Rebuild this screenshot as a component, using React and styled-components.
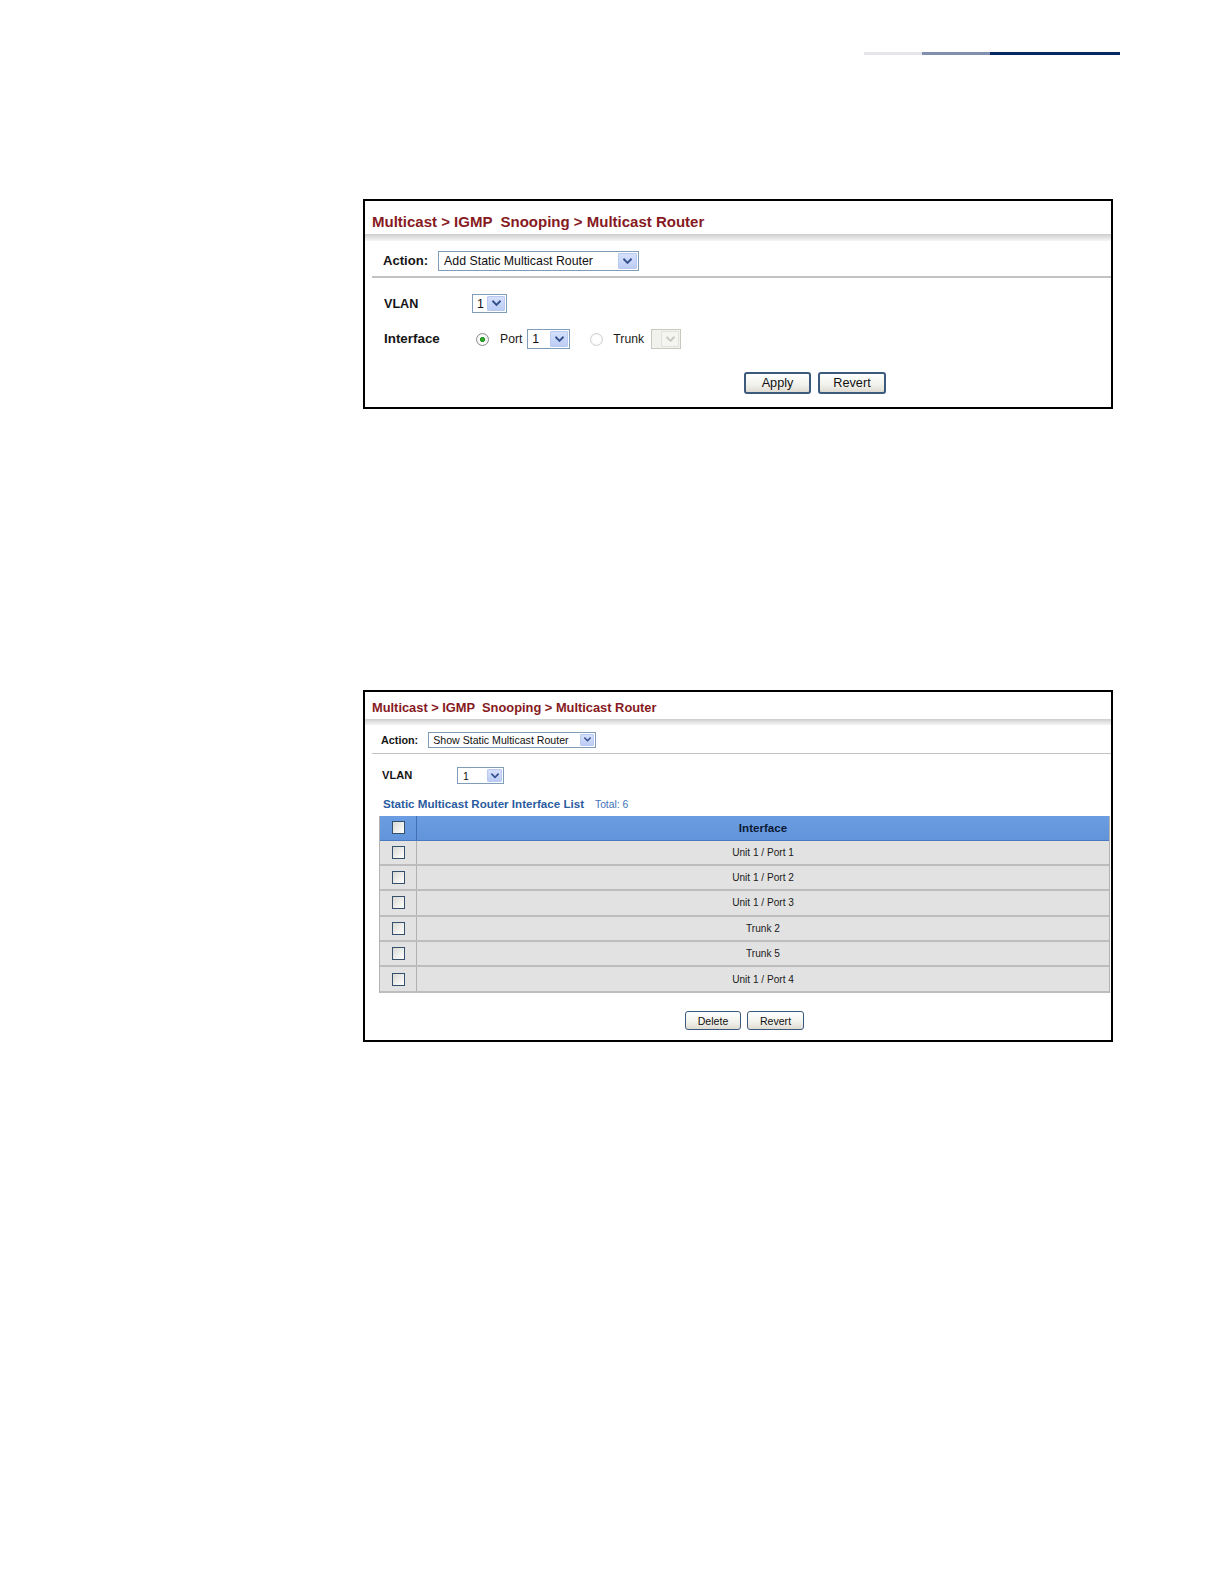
import React from 'react';
import styled, { createGlobalStyle } from 'styled-components';

const Global = createGlobalStyle`
  html, body { margin: 0; padding: 0; background: #fff; }
  body { font-family: "Liberation Sans", Arial, sans-serif; color: #111; }
`;

const Page = styled.div`
  width: 1224px;
  min-height: 1584px;
  padding-top: 52px;
  box-sizing: border-box;
  overflow: hidden;
`;

const HeaderRule = styled.div`
  display: flex;
  margin-left: 864px;
  height: 3px;
`;

const RuleSeg = styled.div`
  width: ${p => p.$w}px;
  background: ${p => p.$c};
`;

const Panel = styled.section`
  margin-left: 363px;
  margin-top: ${p => p.$mt}px;
  width: 750px;
  height: ${p => p.$h}px;
  border: 2px solid #000;
  box-sizing: border-box;
  display: flex;
  flex-direction: column;
`;

const Title = styled.h1`
  margin: 0;
  height: ${p => p.$h}px;
  padding: ${p => p.$pt}px 0 0 7px;
  box-sizing: border-box;
  font-size: ${p => p.$fs}px;
  line-height: 1.15;
  font-weight: bold;
  color: #861a22;
  white-space: pre;
`;

const Band = styled.div`
  height: ${p => p.$h}px;
  background: linear-gradient(#cdcdcd, #e2e2e2 50%, #f5f5f5);
`;

const ActionRow = styled.div`
  display: flex;
  align-items: flex-start;
  gap: 10px;
  margin-left: 7px;
  height: ${p => p.$h}px;
  padding: ${p => p.$pt}px 0 0 ${p => p.$pl}px;
  box-sizing: border-box;
  border-bottom: ${p => p.$line}px solid #c2c2c2;
`;

const Label = styled.span`
  display: inline-block;
  width: ${p => (p.$w ? `${p.$w}px` : 'auto')};
  font-size: ${p => p.$fs}px;
  font-weight: bold;
  color: #151515;
  line-height: ${p => p.$lh || 20}px;
  flex: none;
`;

const Text = styled.span`
  font-size: ${p => p.$fs}px;
  color: #1a1a1a;
  flex: none;
`;

const SelectBox = styled.div`
  display: flex;
  align-items: center;
  width: ${p => p.$w}px;
  height: ${p => p.$h}px;
  box-sizing: border-box;
  border: 1px solid ${p => (p.$disabled ? '#c9c9c0' : '#7f9db9')};
  background: ${p => (p.$disabled ? '#f1f1ee' : '#fff')};
  padding: 1px;
  flex: none;
`;

const SelectText = styled.span`
  flex: 1;
  padding-left: ${p => p.$pl}px;
  font-size: ${p => p.$fs}px;
  color: #111;
  white-space: nowrap;
  overflow: hidden;
`;

const ArrowBtn = styled.span`
  display: flex;
  align-items: center;
  justify-content: center;
  width: ${p => p.$w}px;
  height: 100%;
  box-sizing: border-box;
  border: 1px solid ${p => (p.$disabled ? '#e2e2dc' : '#b9c9ef')};
  border-radius: 1px;
  background: ${p =>
    p.$disabled ? '#f4f4f0' : 'linear-gradient(#d5e0fb, #bccdf5)'};
`;

const Chevron = ({ size, color }) => (
  <svg width={size} height={size * 0.75} viewBox="0 0 8 6">
    <path d="M1 1.3 L4 4.3 L7 1.3" fill="none" stroke={color} strokeWidth="1.7" strokeLinecap="square" />
  </svg>
);

const Select = ({ w, h, fs, value, arrowW, pl = 4, disabled, chev = 9 }) => (
  <SelectBox $w={w} $h={h} $disabled={disabled}>
    <SelectText $fs={fs} $pl={pl}>{value}</SelectText>
    <ArrowBtn $w={arrowW} $disabled={disabled}>
      <Chevron size={chev} color={disabled ? '#c9c9c4' : '#33508e'} />
    </ArrowBtn>
  </SelectBox>
);

const FormRow = styled.div`
  display: flex;
  align-items: center;
  height: ${p => p.$h}px;
  margin-top: ${p => p.$mt}px;
  padding-left: ${p => p.$pl}px;
`;

const Radio = styled.span`
  width: 13px;
  height: 13px;
  border-radius: 50%;
  box-sizing: border-box;
  border: 1px solid ${p => (p.$on ? '#8a8a8a' : '#cfcfcf')};
  background: ${p =>
    p.$on
      ? 'radial-gradient(circle, #3db13d 0, #23961f 2.3px, #fff 2.9px, #eaeaea 100%)'
      : 'radial-gradient(circle, #fff 40%, #f0f0f0 100%)'};
  margin-left: ${p => p.$ml}px;
  margin-right: ${p => p.$mr}px;
  flex: none;
`;

const Gap = styled.span`
  display: inline-block;
  width: ${p => p.$w}px;
  flex: none;
`;

const ButtonBar = styled.div`
  display: flex;
  gap: ${p => p.$gap}px;
  justify-content: ${p => (p.$center ? 'center' : 'flex-start')};
  margin-top: ${p => p.$mt}px;
  padding-left: ${p => p.$pl}px;
  padding-right: ${p => p.$pr || 0}px;
`;

const Button = styled.button`
  width: ${p => p.$w}px;
  height: ${p => p.$h}px;
  box-sizing: border-box;
  border: ${p => p.$bw}px solid #3c5a7c;
  border-radius: 3px;
  background: linear-gradient(#ffffff, #f1f1ec 60%, #dedbd2);
  font-family: "Liberation Sans", Arial, sans-serif;
  font-size: ${p => p.$fs}px;
  color: #111;
  padding: 0;
  cursor: pointer;
`;

const ListTitle = styled.div`
  margin-top: ${p => p.$mt}px;
  padding-left: 18px;
  height: 14px;
  line-height: 14px;
  display: flex;
  align-items: baseline;
  gap: 11px;
`;

const ListName = styled.span`
  font-size: 11.6px;
  font-weight: bold;
  color: #2a5b9e;
`;

const ListTotal = styled.span`
  font-size: 10.3px;
  color: #3e73b8;
`;

const Table = styled.div`
  margin: 5px 1px 0 14px;
  border-left: 1px solid #b2b2b2;
  border-right: 1px solid #b2b2b2;
`;

const HeadRow = styled.div`
  display: grid;
  grid-template-columns: 37px 1fr;
  height: 24.5px;
  box-sizing: border-box;
  background: linear-gradient(#6c9de2, #6194da);
  border-bottom: 1px solid #4a79c0;
`;

const Row = styled.div`
  display: grid;
  grid-template-columns: 37px 1fr;
  height: 25.4px;
  box-sizing: border-box;
  background: #e2e2e2;
  border-bottom: 2px solid #bdbdbd;
`;

const CheckCell = styled.div`
  display: flex;
  align-items: center;
  justify-content: center;
  border-right: 1px solid ${p => (p.$head ? '#4270b2' : '#b0b0b0')};
`;

const Cell = styled.div`
  display: flex;
  align-items: center;
  justify-content: center;
  font-size: ${p => (p.$head ? 11.6 : 10.1)}px;
  font-weight: ${p => (p.$head ? 'bold' : 'normal')};
  color: ${p => (p.$head ? '#0c1a36' : '#1a1a1a')};
`;

const CheckBox = styled.span`
  width: 13px;
  height: 13px;
  box-sizing: border-box;
  border: 1px solid #34506c;
  background: linear-gradient(135deg, #d9d9d4, #f4f4f2 70%, #ffffff);
`;

const rows = ['Unit 1 / Port 1', 'Unit 1 / Port 2', 'Unit 1 / Port 3', 'Trunk 2', 'Trunk 5', 'Unit 1 / Port 4'];

export default function App() {
  return (
    <Page>
      <Global />
      <HeaderRule>
        <RuleSeg $w={58} $c="#e6e6ea" />
        <RuleSeg $w={68} $c="#8190ae" />
        <RuleSeg $w={130} $c="#082861" />
      </HeaderRule>

      <Panel $mt={144} $h={210}>
        <Title $h={33} $pt={12} $fs={15}>{'Multicast > IGMP  Snooping > Multicast Router'}</Title>
        <Band $h={7} />
        <ActionRow $h={37} $pt={10} $pl={11} $line={2}>
          <Label $fs={13.1} $lh={20}>Action:</Label>
          <Select w={201} h={20} fs={12.35} value="Add Static Multicast Router" arrowW={19} />
        </ActionRow>
        <FormRow $h={19} $mt={16} $pl={19}>
          <Label $w={88} $fs={12.6}>VLAN</Label>
          <Select w={35} h={19} fs={12.4} value="1" arrowW={18} pl={3} />
        </FormRow>
        <FormRow $h={20} $mt={16} $pl={19}>
          <Label $w={92} $fs={13.4}>Interface</Label>
          <Radio $on $ml={0} $mr={11} />
          <Text $fs={12.2}>Port</Text>
          <Gap $w={5} />
          <Select w={43} h={20} fs={12.4} value="1" arrowW={18} pl={3} />
          <Radio $ml={20} $mr={10} />
          <Text $fs={12.2}>Trunk</Text>
          <Gap $w={7} />
          <Select w={30} h={20} fs={12.4} value="" arrowW={18} disabled />
        </FormRow>
        <ButtonBar $mt={23} $pl={379} $gap={7}>
          <Button $w={67} $h={22} $bw={2} $fs={12.7}>Apply</Button>
          <Button $w={68} $h={22} $bw={2} $fs={12.7}>Revert</Button>
        </ButtonBar>
      </Panel>

      <Panel $mt={281} $h={352}>
        <Title $h={27} $pt={9} $fs={12.85}>{'Multicast > IGMP  Snooping > Multicast Router'}</Title>
        <Band $h={6} />
        <ActionRow $h={29} $pt={7} $pl={9} $line={1}>
          <Label $fs={10.8} $lh={16}>Action:</Label>
          <Select w={168} h={16} fs={10.6} value="Show Static Multicast Router" arrowW={14} pl={3} chev={7} />
        </ActionRow>
        <FormRow $h={17} $mt={13} $pl={17}>
          <Label $w={75} $fs={11.1} $lh={17}>VLAN</Label>
          <Select w={47} h={17} fs={10.6} value="1" arrowW={15} pl={4} chev={8} />
        </FormRow>
        <ListTitle $mt={13}>
          <ListName>Static Multicast Router Interface List</ListName>
          <ListTotal>Total: 6</ListTotal>
        </ListTitle>
        <Table>
          <HeadRow>
            <CheckCell $head><CheckBox /></CheckCell>
            <Cell $head>Interface</Cell>
          </HeadRow>
          {rows.map((r, i) => (
            <Row key={i}>
              <CheckCell><CheckBox /></CheckCell>
              <Cell>{r}</Cell>
            </Row>
          ))}
        </Table>
        <ButtonBar $mt={18} $pl={14} $pr={1} $gap={6} $center>
          <Button $w={56} $h={19.5} $bw={1.5} $fs={10.6}>Delete</Button>
          <Button $w={57} $h={19.5} $bw={1.5} $fs={10.6}>Revert</Button>
        </ButtonBar>
      </Panel>
    </Page>
  );
}
